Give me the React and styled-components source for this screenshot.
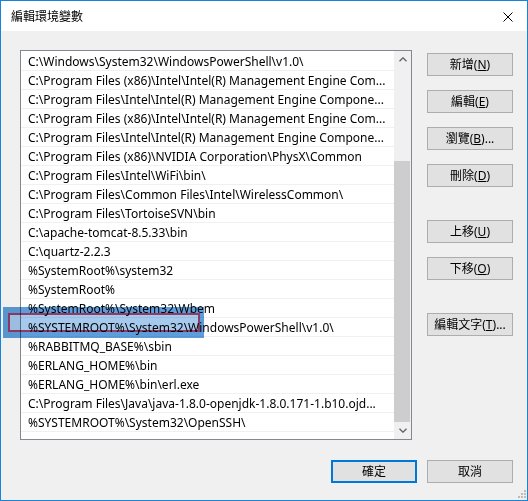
import React from 'react';
import styled, { createGlobalStyle } from 'styled-components';

const GlobalStyle = createGlobalStyle`
  html, body { margin: 0; padding: 0; background: #ffffff; }
  body { font-family: "Noto Sans", "Noto Sans CJK TC", sans-serif; }
`;

const FONT = `"Noto Sans", "Noto Sans CJK TC", sans-serif`;

const Window = styled.div`
  position: relative;
  width: 528px;
  height: 501px;
  box-sizing: border-box;
  border: 1px solid #1883d7;
  display: flex;
  flex-direction: column;
  background: #f0f0f0;
  font-family: ${FONT};
  font-size: 12px;
  color: #000;
`;

const TitleBar = styled.div`
  flex: none;
  height: 30px;
  background: #ffffff;
  display: flex;
  align-items: center;
  justify-content: space-between;
  padding: 0 14px 0 10px;
`;

const Title = styled.span`
  font-size: 12px;
  line-height: 16px;
  padding-top: 1px;
`;

const CloseIcon = styled.svg`
  display: block;
  width: 10px;
  height: 10px;
  margin-top: 1px;
`;

const Body = styled.div`
  flex: 1;
  display: flex;
  flex-direction: column;
  padding: 19px 14px 0 19px;
`;

const MainRow = styled.div`
  display: flex;
  gap: 15px;
`;

const List = styled.div`
  width: 392px;
  height: 390px;
  box-sizing: border-box;
  border: 1px solid #828790;
  background: #ffffff;
  display: flex;
`;

const Rows = styled.div`
  flex: 1;
  min-width: 0;
  padding-top: 1px;
  overflow: hidden;
`;

const Row = styled.div`
  height: 19px;
  box-sizing: border-box;
  border-bottom: 1px solid #f0f0f0;
  padding-left: 7px;
  line-height: 19px;
  white-space: nowrap;
  overflow: hidden;
`;

const Scrollbar = styled.div`
  flex: none;
  width: 17px;
  background: #f0f0f0;
  display: flex;
  flex-direction: column;
`;

const ArrowButton = styled.div`
  flex: none;
  height: 17px;
  display: flex;
  align-items: center;
  justify-content: center;
`;

const Track = styled.div`
  flex: 1;
  display: flex;
  flex-direction: column;
  justify-content: flex-end;
`;

const Thumb = styled.div`
  height: 261px;
  margin: 0 1px 0 0;
  background: #cdcdcd;
`;

const ButtonColumn = styled.div`
  display: flex;
  flex-direction: column;
  gap: 14px;
  padding-top: 3px;
`;

const Button = styled.button`
  width: 86px;
  height: 23px;
  box-sizing: border-box;
  margin: ${p => (p.$mt || 0)}px 0 0 0;
  padding: 0;
  border: ${p => (p.$primary ? '2px solid #0078d7' : '1px solid #adadad')};
  background: #e1e1e1;
  font-family: ${FONT};
  font-size: 12px;
  line-height: 16px;
  color: #000;
  display: flex;
  align-items: center;
  justify-content: center;
`;

const Key = styled.span`
  text-decoration: underline;
`;

const Footer = styled.div`
  margin-top: 20px;
  display: flex;
  justify-content: flex-end;
  gap: 10px;
`;

const Marquee = styled.div`
  position: absolute;
  left: 2px;
  top: 306px;
  width: 201px;
  height: 31px;
  background: #5d9ddb;
  mix-blend-mode: multiply;
  pointer-events: none;
`;

const MarqueeFrame = styled.div`
  position: absolute;
  left: 5px;
  top: 6px;
  width: 192px;
  height: 19px;
  box-sizing: border-box;
  border: 2px solid #8f3c66;
  background: #a6c9ee;
`;

const Grip = styled.svg`
  position: absolute;
  right: 1px;
  bottom: 2px;
  width: 9px;
  height: 9px;
`;

const rows = [
  'C:\\Windows\\System32\\WindowsPowerShell\\v1.0\\',
  'C:\\Program Files (x86)\\Intel\\Intel(R) Management Engine Com...',
  'C:\\Program Files\\Intel\\Intel(R) Management Engine Compone...',
  'C:\\Program Files (x86)\\Intel\\Intel(R) Management Engine Com...',
  'C:\\Program Files\\Intel\\Intel(R) Management Engine Compone...',
  'C:\\Program Files (x86)\\NVIDIA Corporation\\PhysX\\Common',
  'C:\\Program Files\\Intel\\WiFi\\bin\\',
  'C:\\Program Files\\Common Files\\Intel\\WirelessCommon\\',
  'C:\\Program Files\\TortoiseSVN\\bin',
  'C:\\apache-tomcat-8.5.33\\bin',
  'C:\\quartz-2.2.3',
  '%SystemRoot%\\system32',
  '%SystemRoot%',
  '%SystemRoot%\\System32\\Wbem',
  '%SYSTEMROOT%\\System32\\WindowsPowerShell\\v1.0\\',
  '%RABBITMQ_BASE%\\sbin',
  '%ERLANG_HOME%\\bin',
  '%ERLANG_HOME%\\bin\\erl.exe',
  'C:\\Program Files\\Java\\java-1.8.0-openjdk-1.8.0.171-1.b10.ojd...',
  '%SYSTEMROOT%\\System32\\OpenSSH\\',
];

const Chevron = ({ down }) => (
  <svg width="8" height="5" viewBox="0 0 8 5">
    <polyline
      points={down ? '0.5,0.8 4,4.2 7.5,0.8' : '0.5,4.2 4,0.8 7.5,4.2'}
      fill="none"
      stroke="#606060"
      strokeWidth="1.3"
    />
  </svg>
);

const sideButtons = [
  { label: '新增', key: 'N' },
  { label: '編輯', key: 'E' },
  { label: '瀏覽', key: 'B', dots: true },
  { label: '刪除', key: 'D' },
  { label: '上移', key: 'U', mt: 19 },
  { label: '下移', key: 'O' },
  { label: '編輯文字', key: 'T', dots: true, mt: 19 },
];

export default function App() {
  return (
    <>
      <GlobalStyle />
      <Window>
        <TitleBar>
          <Title>編輯環境變數</Title>
          <CloseIcon viewBox="0 0 10 10">
            <line x1="0.5" y1="0.5" x2="9.5" y2="9.5" stroke="#000" strokeWidth="1" />
            <line x1="9.5" y1="0.5" x2="0.5" y2="9.5" stroke="#000" strokeWidth="1" />
          </CloseIcon>
        </TitleBar>
        <Body>
          <MainRow>
            <List>
              <Rows>
                {rows.map((r, i) => (
                  <Row key={i}>{r}</Row>
                ))}
              </Rows>
              <Scrollbar>
                <ArrowButton>
                  <Chevron />
                </ArrowButton>
                <Track>
                  <Thumb />
                </Track>
                <ArrowButton>
                  <Chevron down />
                </ArrowButton>
              </Scrollbar>
            </List>
            <ButtonColumn>
              {sideButtons.map(b => (
                <Button key={b.key} $mt={b.mt}>
                  {b.label}(<Key>{b.key}</Key>){b.dots ? '...' : ''}
                </Button>
              ))}
            </ButtonColumn>
          </MainRow>
          <Footer>
            <Button $primary>確定</Button>
            <Button>取消</Button>
          </Footer>
        </Body>
        <Marquee>
          <MarqueeFrame />
        </Marquee>
        <Grip viewBox="0 0 9 9">
          <rect x="7" y="1" width="2" height="2" fill="#bcbcbc" />
          <rect x="4" y="4" width="2" height="2" fill="#bcbcbc" />
          <rect x="7" y="4" width="2" height="2" fill="#bcbcbc" />
          <rect x="1" y="7" width="2" height="2" fill="#bcbcbc" />
          <rect x="4" y="7" width="2" height="2" fill="#bcbcbc" />
          <rect x="7" y="7" width="2" height="2" fill="#bcbcbc" />
        </Grip>
      </Window>
    </>
  );
}
